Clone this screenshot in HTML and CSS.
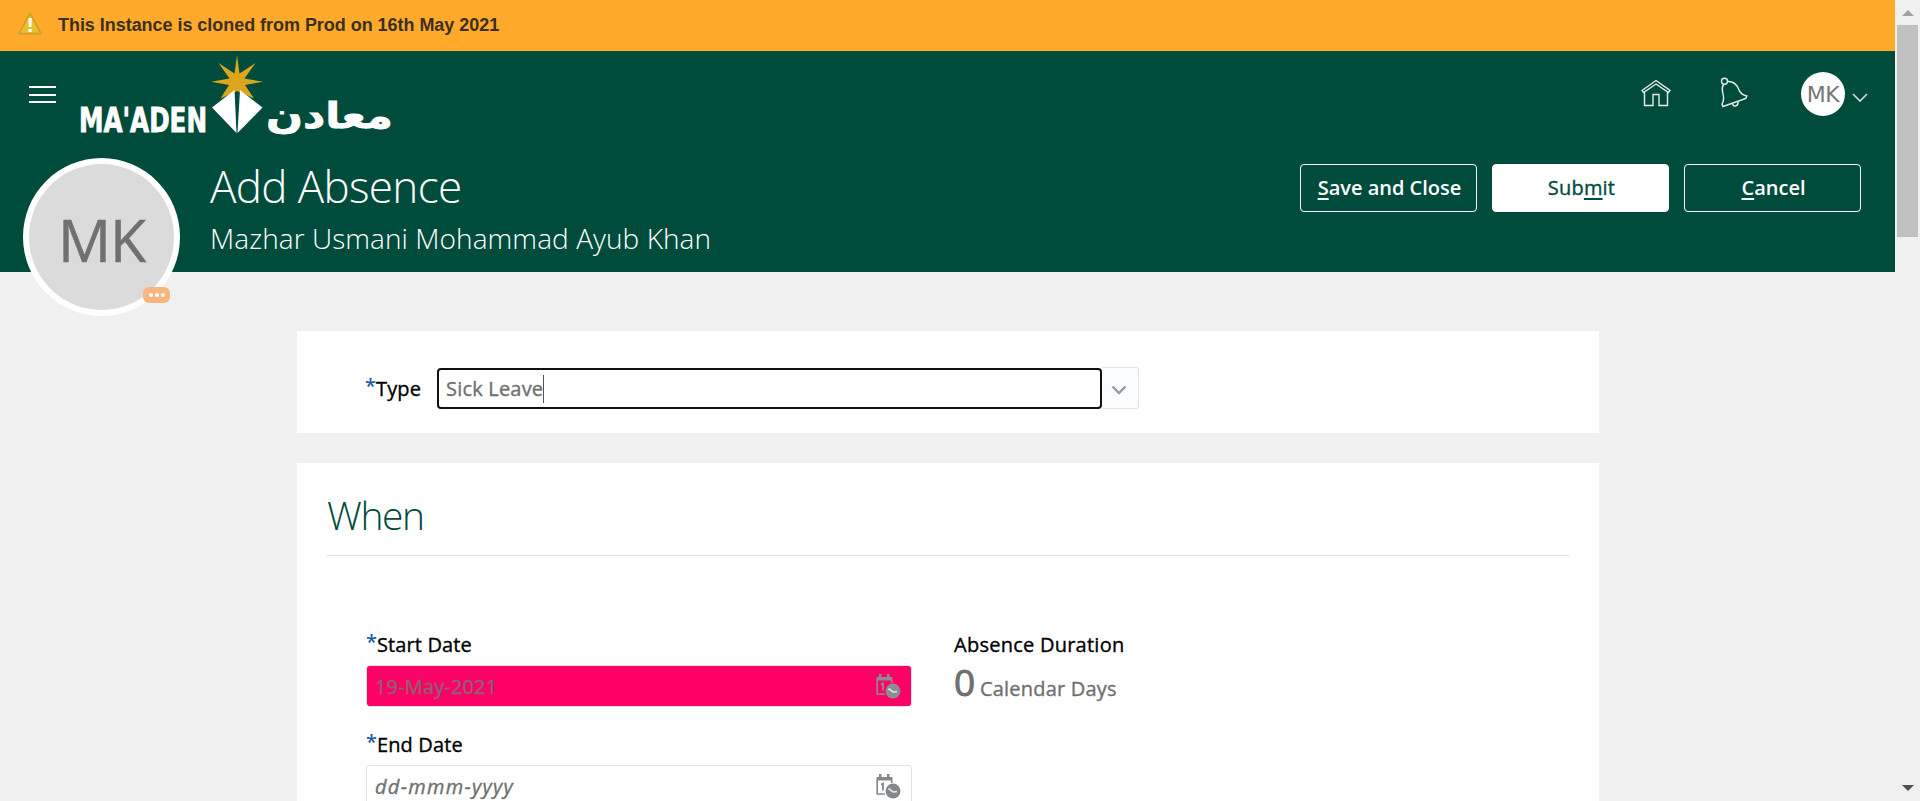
FILE: index.html
```html
<!DOCTYPE html>
<html lang="en">
<head>
<meta charset="utf-8">
<title>Add Absence</title>
<link rel="stylesheet" href="styles.css">
</head>
<body>
<div class="window">
<div class="page">
  <div class="banner">
    <svg class="warn" width="24" height="23" viewBox="0 0 24 23"><path d="M12 1.2 23 21.6H1z" fill="#ecc02c" stroke="#c9a02a" stroke-width="1.6" stroke-linejoin="round"/><path d="M10.3 6h3.6l-.5 9h-2.6zM10.4 17h3.3v3h-3.3z" fill="#fff"/></svg>
    <span class="banner-text">This Instance is cloned from Prod on 16th May 2021</span>
  </div>
  <header class="header">
    <div class="topbar">
      <svg class="menu" width="27" height="18" viewBox="0 0 27 18"><path d="M0 1h27M0 9h27M0 16h27" stroke="#fff" stroke-width="2"/></svg>
      <svg class="logo" width="320" height="100" viewBox="0 0 320 100">
        <path d="M159 3 161.500 21.500 177.500 11 166.500 26.500 185 29.700 167 33 176 46.500 159 39 142.500 46.500 151 33 133 29.700 151.500 26.500 140.500 11 156.500 21.500z" fill="#dca51c"/>
        <path d="M156.500 38 134 55.500 158.500 81zM162 38 184.500 55.500 159.500 81z" fill="#fff"/>
        <text class="logo-latin" x="1" y="80" textLength="128" lengthAdjust="spacingAndGlyphs">MA'ADEN</text>
        <text class="logo-arabic" x="188" y="76" textLength="127" lengthAdjust="spacingAndGlyphs">معادن</text>
      </svg>
      <div class="tools">
        <svg class="home" width="30" height="28" viewBox="0 0 30 28" fill="none" stroke="#e4eeea" stroke-width="1.400"><path d="M1 11.500 15 1.500 29 11.500l-1.500 2L15 5 2.500 13.500zM3.500 13v13.500h8.500V15.500h6v11h8.500V13"/></svg>
        <svg class="bell" width="28" height="32" viewBox="0 0 28 32" fill="none" stroke="#e4eeea" stroke-width="1.400"><circle cx="4.500" cy="4.200" r="3"/><path d="M7.500 4.500c6-.5 9.500 3.500 11.300 8 1.200 3.500 3.700 5.500 8 6.500l-1 2.500L3 29.500l-1-2.300c3-5 1.300-8.500.6-12C1.800 11.500 2.500 9 3.500 7.300M12.500 27c1 3.300 6 2.500 5.500-2"/></svg>
        <div class="user">MK</div>
        <svg class="chev" width="16" height="10" viewBox="0 0 16 10"><path d="M1 1l7 7 7-7" fill="none" stroke="#cfdcd7" stroke-width="1.600"/></svg>
      </div>
    </div>
    <div class="titlebar">
      <div class="avatar">MK<span class="badge"><i></i><i></i><i></i></span></div>
      <div class="titles">
        <h1><span>Add Absence</span></h1>
        <p><span>Mazhar Usmani Mohammad Ayub Khan</span></p>
      </div>
      <div class="actions">
        <button class="btn"><span><u>S</u>ave and Close</span></button>
        <button class="btn primary"><span>Sub<u>m</u>it</span></button>
        <button class="btn"><span><u>C</u>ancel</span></button>
      </div>
    </div>
  </header>
  <main class="main">
    <section class="card type-card">
      <label class="label type-label"><b>*</b>Type</label>
      <div class="combo"><span class="sick">Sick Leave</span><i class="caret"></i></div>
      <div class="drop"><svg width="16" height="10" viewBox="0 0 16 10"><path d="M1.500 1.500 8 8l6.500-6.500" fill="none" stroke="#999" stroke-width="2.400"/></svg></div>
    </section>
    <section class="card when-card">
      <h2><span>When</span></h2>
      <div class="fields">
        <div class="dates">
          <label class="label start"><b>*</b>Start Date</label>
          <div class="date filled"><span>19-May-2021</span>
            <svg width="25" height="25" viewBox="0 0 25 25"><path d="M1.200 3.500V20H9M1.200 4h14.500v5" fill="none" stroke="#8b8e91" stroke-width="1.600"/><path d="M1 3h15v3.500H1zM3 0h2.500v4H3zM11 0h2.500v4H11z" fill="#8b8e91"/><path d="M5 10.500 7 9.500v7" fill="none" stroke="#8b8e91" stroke-width="1.800"/><circle cx="17" cy="17" r="7.500" fill="#8b8e91"/><path d="M12.500 14.500l4.500 3.500 4-.3" fill="none" stroke="#dfe2e4" stroke-width="1.700"/></svg>
          </div>
          <label class="label end"><b>*</b>End Date</label>
          <div class="date"><span class="hint">dd-mmm-yyyy</span>
            <svg width="25" height="25" viewBox="0 0 25 25"><path d="M1.200 3.500V20H9M1.200 4h14.500v5" fill="none" stroke="#85888b" stroke-width="1.600"/><path d="M1 3h15v3.500H1zM3 0h2.500v4H3zM11 0h2.500v4H11z" fill="#85888b"/><path d="M5 10.500 7 9.500v7" fill="none" stroke="#85888b" stroke-width="1.800"/><circle cx="17" cy="17" r="7.500" fill="#85888b"/><path d="M12.500 14.500l4.500 3.500 4-.3" fill="none" stroke="#dfe2e4" stroke-width="1.700"/></svg>
          </div>
        </div>
        <div class="duration">
          <div class="label dur">Absence Duration</div>
          <div class="amount"><span class="num">0</span><span class="unit">Calendar Days</span></div>
        </div>
      </div>
    </section>
  </main>
</div>
<div class="scroll">
  <svg width="12" height="6" viewBox="0 0 12 6"><path d="M0 6l6-6 6 6z" fill="#a3a3a3"/></svg>
  <div class="thumb"></div>
  <svg class="down" width="12" height="6" viewBox="0 0 12 6"><path d="M0 0l6 6 6-6z" fill="#505050"/></svg>
</div>
</div>
</body>
</html>
```
FILE: styles.css
```css
* { box-sizing: border-box; }
body { margin: 0; background: #f0f0f0; font-family: "Open Sans", "Noto Sans", sans-serif; overflow: hidden; }
svg { display: block; flex: none; }
.window { display: flex; height: 801px; overflow: hidden; }
.page { width: 1895px; }
.banner { height: 51px; background: #ffaa2b; display: flex; align-items: center; padding-left: 18px; }
.warn { margin-top: -4px; }
.banner-text { margin: -1px 0 0 16px; font: bold 18px "Liberation Sans", Arial, sans-serif; letter-spacing: -.04px; color: #3b301c; white-space: nowrap; }
.header { height: 221px; background: #004c3c; color: #fff; }
.topbar { height: 88px; display: flex; align-items: flex-start; padding-left: 29px; }
.menu { margin-top: 35px; }
.logo { margin: 1px 0 0 22px; overflow: visible; }
.logo-latin { font: bold 33px "DejaVu Sans Condensed", "DejaVu Sans", sans-serif; fill: #fff; stroke: #fff; stroke-width: .8; }
.logo-arabic { font: bold 36px "DejaVu Sans", sans-serif; fill: #fff; stroke: #fff; stroke-width: .8; }
.tools { margin-left: auto; display: flex; align-items: flex-start; padding-right: 27px; }
.home { margin-top: 28px; }
.bell { margin: 26px 0 0 49px; }
.user { width: 44px; height: 44px; margin: 21px 0 0 53px; border-radius: 50%; background: #fff; color: #777; font: 22px/45px "DejaVu Sans", sans-serif; text-align: center; letter-spacing: -.5px; }
.chev { margin: 42px 0 0 7px; }
.titlebar { display: flex; align-items: flex-start; padding: 19px 34px 0 23px; }
.avatar { position: relative; width: 157px; height: 158px; flex: none; border: 6px solid #fff; border-radius: 50%; background: #dbdbdb; color: #707070; font-size: 59px; line-height: 151px; text-align: center; letter-spacing: -1px; -webkit-text-stroke: .5px #707070; }
.badge { position: absolute; left: 114px; top: 123px; width: 27px; height: 16px; border-radius: 6px; background: #f8b57f; display: flex; align-items: center; justify-content: center; gap: 2px; }
.badge i { width: 4px; height: 4px; border-radius: 50%; background: #fff; }
.titles { margin-left: 30px; white-space: nowrap; }
h1, h2, p { margin: 0; font-weight: 300; }
h1 { font-size: 44px; line-height: 56px; letter-spacing: -.65px; }
p { font-size: 28px; line-height: 40px; margin-top: 4px; letter-spacing: .07px; }
.actions { margin: 6px 0 0 auto; display: flex; gap: 15px; }
.btn { width: 177px; height: 48px; border: 1px solid #fff; border-radius: 4px; padding: 0 0 1px 2px; background: transparent; color: #fff; font: 600 20px/26px "Open Sans", sans-serif; white-space: nowrap; }
.btn.primary { background: #fff; color: #004c3c; font-weight: 400; letter-spacing: .2px; -webkit-text-stroke: .35px; }
u { text-decoration-thickness: 2px; text-underline-offset: 3px; text-decoration-skip-ink: none; }
.main { padding: 59px 0 0 297px; width: 1599px; }
.card { background: #fff; }
.type-card { height: 102px; display: flex; align-items: flex-start; padding: 36px 0 0 68px; }
.label { display: block; color: #000; font-size: 20px; line-height: 28px; letter-spacing: .12px; white-space: nowrap; -webkit-text-stroke: .35px; }
.label b { color: #1a5fae; font-weight: 600; display: inline-block; width: 11px; line-height: 20px; vertical-align: 3px; -webkit-text-stroke: 0; }
.type-label { width: 72px; margin-top: 8px; }
.combo { width: 665px; height: 41px; margin-top: 1px; border: 2px solid #111; border-radius: 4px; padding-left: 7px; display: flex; align-items: center; color: #6f6f6f; font-size: 20px; letter-spacing: .2px; -webkit-text-stroke: .35px; }
.caret { width: 1px; height: 28px; background: #555; }
.drop { width: 37px; height: 42px; border: 1px solid #e2e5e8; border-left: 0; background: #fbfcfe; border-radius: 0 3px 3px 0; display: flex; align-items: center; justify-content: center; padding: 4px 3px 0 0; }
.when-card { margin-top: 30px; height: 400px; padding: 0 30px; }
h2 { height: 93px; border-bottom: 1px solid #d5dfdf; padding-top: 27px; color: #004c3c; font-size: 39px; line-height: 50px; letter-spacing: -1.4px; }
.fields { display: flex; padding: 76px 0 0 39px; }
.dates { width: 546px; }
.date { height: 42px; border: 1px solid #dfe4e7; border-radius: 3px; display: flex; align-items: center; justify-content: space-between; padding: 0 10px 0 8px; color: #6f6f6f; font-size: 20px; letter-spacing: .15px; -webkit-text-stroke: .35px; }
.date.filled { background: #ff0066; color: #8a6474; background-clip: padding-box; }
.start { height: 33px; margin-top: -1px; }
.start + .date { margin-top: 1px; }
.end { margin-top: 24px; height: 34px; }
.hint { font-style: italic; letter-spacing: 1.3px; }
.duration { margin-left: 42px; }
.dur { margin-top: -1px; letter-spacing: .25px; }
.amount { color: #6f6f6f; display: flex; align-items: baseline; line-height: 46px; }
.num { font-size: 37px; width: 26px; -webkit-text-stroke: 1px; }
.unit { font-size: 20px; letter-spacing: .2px; -webkit-text-stroke: .35px; }
.scroll { width: 25px; background: #f0f0f0; display: flex; flex-direction: column; align-items: center; padding: 10px 0; }
.thumb { width: 21px; height: 212px; background: #c1c1c1; margin-top: 9px; }
.down { margin-top: auto; }
```
